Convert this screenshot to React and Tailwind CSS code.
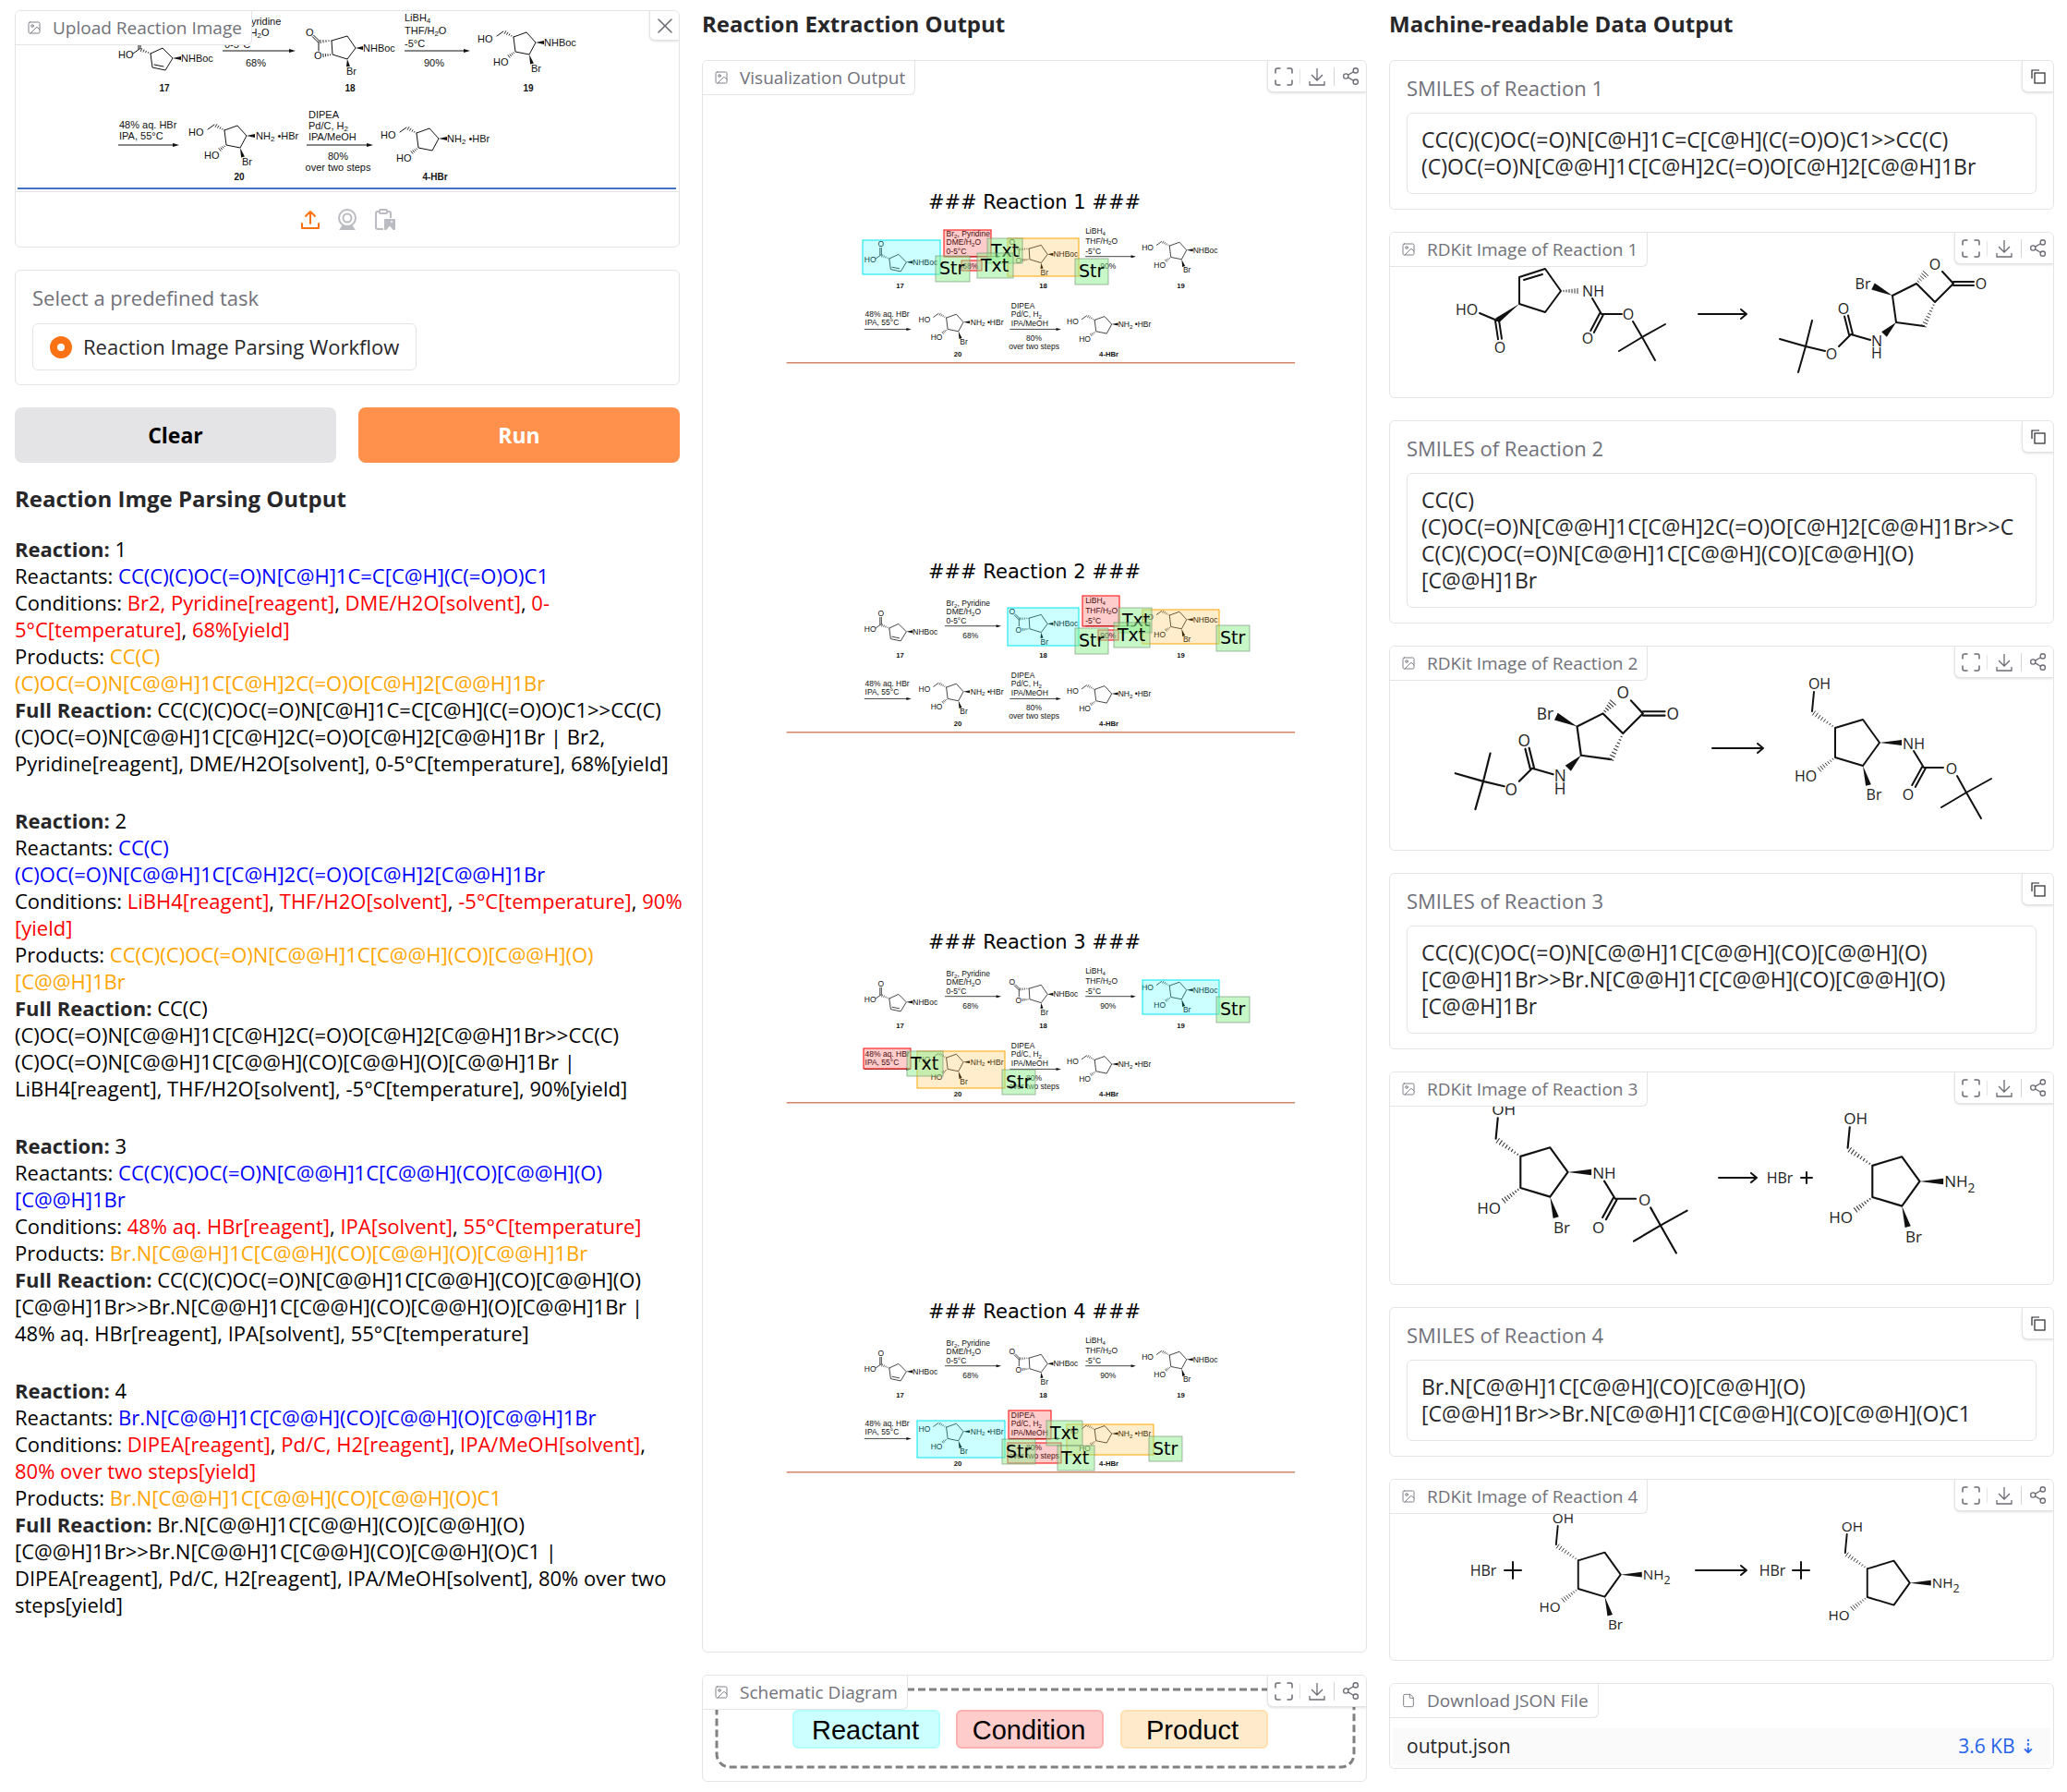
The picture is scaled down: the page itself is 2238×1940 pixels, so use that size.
import React, { useState } from 'react';
import { Image, Maximize, Share2, X, File } from 'lucide-react';

const reactions = [
  {
    reactants: ['CC(C)(C)OC(=O)N[C@H]1C=C[C@H](C(=O)O)C1'],
    conditions: [
      ['Br2, Pyridine[reagent]', 'DME/H2O[solvent]', '0-'],
      ['5°C[temperature]', '68%[yield]'],
    ],
    products: ['CC(C)', '(C)OC(=O)N[C@@H]1C[C@H]2C(=O)O[C@H]2[C@@H]1Br'],
    full: [
      'CC(C)(C)OC(=O)N[C@H]1C=C[C@H](C(=O)O)C1>>CC(C)',
      '(C)OC(=O)N[C@@H]1C[C@H]2C(=O)O[C@H]2[C@@H]1Br | Br2,',
      'Pyridine[reagent], DME/H2O[solvent], 0-5°C[temperature], 68%[yield]',
    ],
    smiles: [
      'CC(C)(C)OC(=O)N[C@H]1C=C[C@H](C(=O)O)C1>>CC(C)',
      '(C)OC(=O)N[C@@H]1C[C@H]2C(=O)O[C@H]2[C@@H]1Br',
    ],
  },
  {
    reactants: ['CC(C)', '(C)OC(=O)N[C@@H]1C[C@H]2C(=O)O[C@H]2[C@@H]1Br'],
    conditions: [
      ['LiBH4[reagent]', 'THF/H2O[solvent]', '-5°C[temperature]', '90%'],
      ['[yield]'],
    ],
    products: ['CC(C)(C)OC(=O)N[C@@H]1C[C@@H](CO)[C@@H](O)', '[C@@H]1Br'],
    full: [
      'CC(C)',
      '(C)OC(=O)N[C@@H]1C[C@H]2C(=O)O[C@H]2[C@@H]1Br>>CC(C)',
      '(C)OC(=O)N[C@@H]1C[C@@H](CO)[C@@H](O)[C@@H]1Br |',
      'LiBH4[reagent], THF/H2O[solvent], -5°C[temperature], 90%[yield]',
    ],
    smiles: [
      'CC(C)',
      '(C)OC(=O)N[C@@H]1C[C@H]2C(=O)O[C@H]2[C@@H]1Br>>C',
      'C(C)(C)OC(=O)N[C@@H]1C[C@@H](CO)[C@@H](O)',
      '[C@@H]1Br',
    ],
  },
  {
    reactants: ['CC(C)(C)OC(=O)N[C@@H]1C[C@@H](CO)[C@@H](O)', '[C@@H]1Br'],
    conditions: [['48% aq. HBr[reagent]', 'IPA[solvent]', '55°C[temperature]']],
    products: ['Br.N[C@@H]1C[C@@H](CO)[C@@H](O)[C@@H]1Br'],
    full: [
      'CC(C)(C)OC(=O)N[C@@H]1C[C@@H](CO)[C@@H](O)',
      '[C@@H]1Br>>Br.N[C@@H]1C[C@@H](CO)[C@@H](O)[C@@H]1Br |',
      '48% aq. HBr[reagent], IPA[solvent], 55°C[temperature]',
    ],
    smiles: [
      'CC(C)(C)OC(=O)N[C@@H]1C[C@@H](CO)[C@@H](O)',
      '[C@@H]1Br>>Br.N[C@@H]1C[C@@H](CO)[C@@H](O)',
      '[C@@H]1Br',
    ],
  },
  {
    reactants: ['Br.N[C@@H]1C[C@@H](CO)[C@@H](O)[C@@H]1Br'],
    conditions: [
      ['DIPEA[reagent]', 'Pd/C, H2[reagent]', 'IPA/MeOH[solvent]', ''],
      ['80% over two steps[yield]'],
    ],
    products: ['Br.N[C@@H]1C[C@@H](CO)[C@@H](O)C1'],
    full: [
      'Br.N[C@@H]1C[C@@H](CO)[C@@H](O)',
      '[C@@H]1Br>>Br.N[C@@H]1C[C@@H](CO)[C@@H](O)C1 |',
      'DIPEA[reagent], Pd/C, H2[reagent], IPA/MeOH[solvent], 80% over two',
      'steps[yield]',
    ],
    smiles: [
      'Br.N[C@@H]1C[C@@H](CO)[C@@H](O)',
      '[C@@H]1Br>>Br.N[C@@H]1C[C@@H](CO)[C@@H](O)C1',
    ],
  },
];

// top of each reaction in the visualization, then its boxes as kind, x, y, width, height
const overlays = [
  {
    top: 0,
    boxes: [
      ['reactant', 173, 194, 84, 37],
      ['condition', 261, 183, 51, 29],
      ['condition', 280, 216, 22, 11],
      ['product', 330, 192, 77, 41],
      ['Str', 252, 211, 37, 28],
      ['Txt', 308, 192, 38, 27],
      ['Txt', 297, 208, 39, 27],
      ['Str', 403, 214, 36, 28],
    ],
  },
  {
    top: 400,
    boxes: [
      ['reactant', 330, 192, 77, 41],
      ['condition', 411, 179, 40, 33],
      ['condition', 428, 216, 22, 11],
      ['product', 476, 194, 83, 37],
      ['Str', 403, 214, 36, 28],
      ['Txt', 450, 192, 36, 27],
      ['Txt', 445, 208, 39, 27],
      ['Str', 556, 211, 36, 28],
    ],
  },
  {
    top: 801,
    boxes: [
      ['reactant', 476, 194, 83, 37],
      ['condition', 174, 268, 51, 22],
      ['product', 232, 271, 95, 40],
      ['Str', 556, 212, 36, 28],
      ['Txt', 221, 271, 39, 27],
      ['Str', 324, 291, 36, 27],
    ],
  },
  {
    top: 1201,
    boxes: [
      ['reactant', 232, 271, 95, 40],
      ['condition', 331, 260, 46, 31],
      ['condition', 330, 295, 58, 22],
      ['product', 394, 275, 94, 33],
      ['Str', 324, 291, 36, 27],
      ['Txt', 372, 271, 39, 27],
      ['Txt', 384, 298, 40, 27],
      ['Str', 483, 288, 36, 27],
    ],
  },
];

const overlayColors = {
  reactant: ['#00ffff', '#00e5ee'],
  condition: ['#ff0000', '#ff0000'],
  product: ['#ffa500', '#ffa500'],
};

/* ---------- drawing helpers ---------- */

function Bonds({ d, w = 1 }) {
  return <path d={d} fill="none" stroke="#111" strokeWidth={w} strokeLinecap="round" strokeLinejoin="round" />;
}

function normal(a, b) {
  const dx = b[0] - a[0];
  const dy = b[1] - a[1];
  const len = Math.hypot(dx, dy);
  return [-dy / len, dx / len];
}

function Wedge({ from, to, size = 3 }) {
  const [nx, ny] = normal(from, to);
  return (
    <polygon
      fill="#111"
      points={`${from[0]},${from[1]} ${to[0] + nx * size},${to[1] + ny * size} ${to[0] - nx * size},${to[1] - ny * size}`}
    />
  );
}

function Hash({ from, to, size = 3, n = 6, w = 1 }) {
  const [nx, ny] = normal(from, to);
  const steps = Array.from({ length: n }, (_, i) => (i + 1) / n);
  return (
    <g stroke="#333" strokeWidth={w}>
      {steps.map((t) => {
        const x = from[0] + (to[0] - from[0]) * t;
        const y = from[1] + (to[1] - from[1]) * t;
        const s = size * (0.25 + 0.75 * t);
        return <line key={t} x1={x + nx * s} y1={y + ny * s} x2={x - nx * s} y2={y - ny * s} />;
      })}
    </g>
  );
}

function Double({ from, to, gap = 2, w = 1 }) {
  const [nx, ny] = normal(from, to);
  const line = (k) =>
    `M${from[0] + nx * gap * k} ${from[1] + ny * gap * k}L${to[0] + nx * gap * k} ${to[1] + ny * gap * k}`;
  return <Bonds w={w} d={line(1) + line(-1)} />;
}

function Arrow({ x1, x2, y }) {
  return (
    <g>
      <line x1={x1} x2={x2 - 3} y1={y} y2={y} stroke="#111" strokeWidth="1" />
      <polygon points={`${x2},${y} ${x2 - 7},${y - 2} ${x2 - 7},${y + 2}`} fill="#111" />
    </g>
  );
}

function OpenArrow({ x1, x2, y }) {
  return <Bonds w={2} d={`M${x1} ${y}H${x2}M${x2 - 6} ${y - 5}L${x2} ${y}L${x2 - 6} ${y + 5}`} />;
}

function Atom({ x, y, children }) {
  return (
    <text x={x} y={y + 6} textAnchor="middle">
      {children}
    </text>
  );
}

/* ---------- source scheme (compounds 17 to 4-HBr) ---------- */

function BromoRing({ x, y, br = true }) {
  return (
    <g transform={`translate(${x} ${y})`}>
      <Bonds d="M-18 -1L-11 -6M0 0L14 -5L24 6L17 19L2 16L0 0" />
      <Hash from={[0, 0]} to={[-9, -5]} size={2} n={4} />
      <Hash from={[2, 16]} to={[-5, 21]} size={2} n={4} />
      <Wedge from={[24, 6]} to={[33, 6]} size={2} />
      {br && <Wedge from={[17, 19]} to={[20, 29]} size={2} />}
      <text x="-39" y="6">HO</text>
      <text x="-22" y="31">HO</text>
      {br && <text x="19" y="38">Br</text>}
    </g>
  );
}

function Scheme({ line }) {
  return (
    <g fontFamily="Liberation Sans, Arial, sans-serif" fontSize="11" fill="#111">
      {/* 17 */}
      <text x="128" y="62">HO</text>
      <text x="147" y="40">O</text>
      <Double from={[151, 42]} to={[151, 52]} gap={1} />
      <Bonds d="M144 57L151 52M163 57L176 51L187 62L179 75L165 72L163 57M167 69L177 71" />
      <Hash from={[163, 57]} to={[153, 53]} size={2} n={4} />
      <Wedge from={[187, 62]} to={[196, 62]} size={2} />
      <text x="196" y="66">NHBoc</text>

      <text x="243" y="26">Br<tspan fontSize="8" dy="2">2</tspan><tspan dy="-2">, Pyridine</tspan></text>
      <text x="243" y="38">DME/H<tspan fontSize="8" dy="2">2</tspan><tspan dy="-2">O</tspan></text>
      <text x="243" y="51">0-5°C</text>
      <Arrow x1={241} x2={320} y={54} />
      <text x="277" y="71" textAnchor="middle">68%</text>

      {/* 18 */}
      <text x="331" y="38">O</text>
      <text x="340" y="63">O</text>
      <Double from={[339, 38]} to={[345, 44]} gap={1} />
      <Bonds d="M345 44V54M359 43L376 38L385 51L376 63L360 58L359 43" />
      <Hash from={[359, 43]} to={[347, 44]} size={2} n={4} />
      <Hash from={[360, 58]} to={[350, 59]} size={2} n={4} />
      <Wedge from={[385, 51]} to={[393, 51]} size={2} />
      <Wedge from={[376, 63]} to={[377, 71]} size={2} />
      <text x="393" y="55">NHBoc</text>
      <text x="375" y="80">Br</text>

      <text x="438" y="22">LiBH<tspan fontSize="8" dy="2">4</tspan></text>
      <text x="438" y="36">THF/H<tspan fontSize="8" dy="2">2</tspan><tspan dy="-2">O</tspan></text>
      <text x="438" y="50">-5°C</text>
      <Arrow x1={438} x2={509} y={54} />
      <text x="470" y="71" textAnchor="middle">90%</text>

      {/* 19 */}
      <BromoRing x={556} y={39} />
      <text x="589" y="49">NHBoc</text>

      <text x="129" y="138">48% aq. HBr</text>
      <text x="129" y="150">IPA, 55°C</text>
      <Arrow x1={128} x2={194} y={156} />

      {/* 20 */}
      <BromoRing x={243} y={140} />
      <text x="277" y="150">NH<tspan fontSize="8" dy="2">2</tspan><tspan dy="-2"> •HBr</tspan></text>

      <text x="334" y="127">DIPEA</text>
      <text x="334" y="139">Pd/C, H<tspan fontSize="8" dy="2">2</tspan></text>
      <text x="334" y="151">IPA/MeOH</text>
      <Arrow x1={332} x2={404} y={156} />
      <text x="366" y="172" textAnchor="middle">80%</text>
      <text x="366" y="184" textAnchor="middle">over two steps</text>

      {/* 4-HBr */}
      <BromoRing x={451} y={143} br={false} />
      <text x="484" y="153">NH<tspan fontSize="8" dy="2">2</tspan><tspan dy="-2"> •HBr</tspan></text>

      <g fontWeight="bold" fontSize="10" textAnchor="middle">
        <text x="178" y="98">17</text>
        <text x="379" y="98">18</text>
        <text x="572" y="98">19</text>
        <text x="259" y="194">20</text>
        <text x="471" y="194">4-HBr</text>
      </g>
      <line x1="19" x2="732" y1="203" y2="203" stroke={line} strokeWidth="2" />
    </g>
  );
}

function UploadDrawing() {
  return (
    <svg viewBox="0 0 718 195" className="block w-full" role="img" aria-label="Reaction scheme">
      <g transform="translate(-17 -11)">
        <Scheme line="#4472c4" />
      </g>
    </svg>
  );
}

function Overlay({ kind, x, y, w, h }) {
  if (kind === 'Str' || kind === 'Txt') {
    return (
      <g>
        <rect x={x} y={y} width={w} height={h} fill="#90ee90" fillOpacity="0.5" stroke="#6b8e6b" strokeOpacity="0.6" />
        <text x={x + 4} y={y + 20} fontSize="19">{kind}</text>
      </g>
    );
  }
  const [fill, stroke] = overlayColors[kind];
  return <rect x={x} y={y} width={w} height={h} fill={fill} fillOpacity="0.2" stroke={stroke} />;
}

function VisualizationDrawing() {
  return (
    <svg viewBox="0 0 718 1722" className="block w-full" role="img" aria-label="Extracted reactions">
      {overlays.map(({ top, boxes }, i) => (
        <g key={i} transform={`translate(0 ${top})`} fontFamily="DejaVu Sans, sans-serif">
          <text x="359" y="160" fontSize="21" textAnchor="middle">{`### Reaction ${i + 1} ###`}</text>
          <g transform="translate(76 170) scale(0.772)">
            <Scheme line="#d2876a" />
          </g>
          {boxes.map(([kind, x, y, w, h], k) => (
            <Overlay key={k} kind={kind} x={x} y={y} w={w} h={h} />
          ))}
        </g>
      ))}
    </svg>
  );
}

function SchematicDrawing() {
  return (
    <svg viewBox="0 0 718 114" className="block w-full" role="img" aria-label="Legend">
      <rect x="15" y="15" width="690" height="84" rx="14" fill="none" stroke="#808080" strokeWidth="3" strokeDasharray="8 4" />
      <rect x="98" y="38" width="158" height="40" rx="5" fill="#ccffff" stroke="#b3fdfd" strokeWidth="2" />
      <rect x="275" y="38" width="158" height="40" rx="5" fill="#ffcccc" stroke="#ffb0b0" strokeWidth="2" />
      <rect x="453" y="38" width="158" height="40" rx="5" fill="#ffebcc" stroke="#ffe0b0" strokeWidth="2" />
      <g fontFamily="Liberation Sans, Arial, sans-serif" fontSize="29" textAnchor="middle">
        <text x="176" y="69">Reactant</text>
        <text x="353" y="69">Condition</text>
        <text x="530" y="69">Product</text>
      </g>
    </svg>
  );
}

/* ---------- molecules of the RDKit panels ---------- */

function Lactone() {
  return (
    <g>
      <Bonds
        w={2}
        d="M544 68L570 55L590 75M578 101L548 97L544 68M598 42L610 55L590 75M520 116L499 110L486 123M471 128L450 123M457 95L450 123L442 151M422 115L450 123"
      />
      <Double from={[610, 55]} to={[632, 55]} w={2} />
      <Double from={[499, 110]} to={[494, 90]} w={2} />
      <Wedge from={[544, 68]} to={[523, 58]} size={4} />
      <Wedge from={[548, 97]} to={[535, 110]} size={4} />
      <Hash from={[570, 55]} to={[580, 44]} n={5} size={4} />
      <Hash from={[590, 75]} to={[578, 101]} n={8} />
      <Atom x={512} y={55}>Br</Atom>
      <Atom x={590} y={34}>O</Atom>
      <Atom x={640} y={55}>O</Atom>
      <Atom x={491} y={82}>O</Atom>
      <Atom x={478} y={131}>O</Atom>
      <Atom x={527} y={117}>N</Atom>
      <Atom x={527} y={130}>H</Atom>
    </g>
  );
}

function Cyclopentane({ br = true, boc = false }) {
  return (
    <g>
      <Bonds w={2} d="M459 49L457 70M482 88L512 79L530 104L512 129L482 120L482 88" />
      <Hash from={[482, 88]} to={[459, 72]} n={8} />
      <Hash from={[482, 120]} to={[465, 133]} n={7} />
      <Wedge from={[530, 104]} to={[554, 104]} />
      <Atom x={465} y={40}>OH</Atom>
      <Atom x={450} y={140}>HO</Atom>
      {br && <Wedge from={[512, 129]} to={[518, 150]} />}
      {br && <Atom x={524} y={160}>Br</Atom>}
      {boc ? (
        <g>
          <Atom x={567} y={105}>NH</Atom>
          <Bonds w={2} d="M567 113L578 131H599M614 140L624 158M651 143L624 158L597 174M624 158L640 186" />
          <Double from={[578, 131]} to={[567, 151]} w={2} />
          <Atom x={608} y={132}>O</Atom>
          <Atom x={561} y={160}>O</Atom>
        </g>
      ) : (
        <text x="555" y="110">
          NH<tspan fontSize="13" dy="5">2</tspan>
        </text>
      )}
    </g>
  );
}

function Drawing({ height, label, children }) {
  return (
    <svg viewBox={`0 0 718 ${height}`} className="block w-full" role="img" aria-label={label}>
      <g fontFamily="Open Sans, sans-serif" fontSize="16" fill="#222">{children}</g>
    </svg>
  );
}

const rdkitDrawings = [
  <Drawing key="1" height={178} label="RDKit drawing 1">
    <Bonds
      w={2}
      d="M97 87L116 95M140 77V48L168 39L185 63L168 86L140 77M145 51L165 45M219 71L229 88H251M263 96L273 113M298 99L273 113L248 128M273 113L287 138"
    />
    <Wedge from={[140, 77]} to={[116, 95]} />
    <Double from={[116, 95]} to={[119, 115]} w={2} />
    <Double from={[229, 88]} to={[219, 107]} w={2} />
    <Hash from={[185, 63]} to={[203, 63]} />
    <Atom x={83} y={83}>HO</Atom>
    <Atom x={119} y={124}>O</Atom>
    <Atom x={220} y={63}>NH</Atom>
    <Atom x={258} y={88}>O</Atom>
    <Atom x={214} y={114}>O</Atom>
    <OpenArrow x1={334} x2={386} y={88} />
    <Lactone />
  </Drawing>,
  <Drawing key="2" height={220} label="RDKit drawing 2">
    <g transform="translate(-385 13) scale(1.08)">
      <Lactone />
    </g>
    <OpenArrow x1={349} x2={404} y={110} />
    <Cyclopentane boc />
  </Drawing>,
  <Drawing key="3" height={229} label="RDKit drawing 3">
    <g transform="translate(-373 -3) scale(1.067)">
      <Cyclopentane boc />
    </g>
    <OpenArrow x1={356} x2={397} y={114} />
    <Atom x={422} y={114}>HBr</Atom>
    <Bonds w={2} d="M445 114H457M451 108V120" />
    <g transform="translate(8 7) scale(1.067)">
      <Cyclopentane />
    </g>
  </Drawing>,
  <Drawing key="4" height={195} label="RDKit drawing 4">
    <Atom x={101} y={98}>HBr</Atom>
    <Bonds w={2} d="M124 98H142M133 89V107" />
    <g transform="translate(-258 3) scale(0.958)">
      <Cyclopentane />
    </g>
    <OpenArrow x1={331} x2={386} y={98} />
    <Atom x={414} y={98}>HBr</Atom>
    <Bonds w={2} d="M436 98H454M445 89V107" />
    <g transform="translate(55 12) scale(0.958)">
      <Cyclopentane br={false} />
    </g>
  </Drawing>,
];

/* ---------- icons ---------- */

function DownloadIcon() {
  return (
    <svg viewBox="0 0 20 20" className="size-5" fill="none" stroke="currentColor" strokeWidth="1.3">
      <path d="M10 1V14M4 8L10 14L16 8M2 15V19H18V15" />
    </svg>
  );
}

function UploadIcon() {
  return (
    <svg viewBox="0 0 22 22" className="size-[22px]" fill="none" stroke="currentColor" strokeWidth="2" strokeLinecap="round" strokeLinejoin="round">
      <path d="M11 15V2M6 7L11 2L16 7M2 15V20H20V15" />
    </svg>
  );
}

function WebcamIcon() {
  return (
    <svg viewBox="0 0 24 24" className="size-6" fill="none" stroke="currentColor" strokeWidth="2">
      <circle cx="12" cy="10" r="9" />
      <circle cx="12" cy="10" r="4.5" />
      <path d="M7 19L5 22H19L17 19Z" fill="currentColor" />
    </svg>
  );
}

function PasteIcon() {
  return (
    <svg viewBox="0 0 24 24" className="size-6" fill="none" stroke="currentColor" strokeWidth="2" strokeLinejoin="round">
      <path d="M10 22H4Q2 22 2 20V5Q2 3 4 3H16Q18 3 18 5V10" />
      <rect x="6" y="1" width="8" height="4" rx="1" fill="white" />
      <path d="M12 12H22V22H21L17 17L13 22H12Z" fill="currentColor" />
      <circle cx="19" cy="14" r="1" fill="white" stroke="none" />
    </svg>
  );
}

function CopyIcon() {
  return (
    <svg viewBox="0 0 16 16" className="size-4" fill="none" stroke="currentColor" strokeWidth="1.2">
      <path d="M1 10V1H9" />
      <rect x="4" y="4" width="11" height="11" />
    </svg>
  );
}

/* ---------- page parts ---------- */

function Card({ className = '', children }) {
  return (
    <section className={`relative overflow-hidden rounded-md border border-[#e4e4e7] bg-white ${className}`}>
      {children}
    </section>
  );
}

function BlockLabel({ icon: Icon = Image, children }) {
  return (
    <h3 className="absolute top-0 left-0 flex h-[37px] items-center gap-3 rounded-br-md border-r border-b border-[#e4e4e7] bg-white pr-2.5 pl-3 text-[19px] text-[#71717a]">
      <Icon className="size-4" strokeWidth={1.3} />
      {children}
    </h3>
  );
}

function Toolbar() {
  return (
    <div className="absolute top-0 right-0 flex h-[34px] items-center rounded-bl-md border-b border-l border-[#e4e4e7] bg-white text-[#6b6b73] shadow-sm">
      <button type="button" aria-label="Fullscreen" className="flex w-[34px] justify-center">
        <Maximize className="size-6" strokeWidth={1.5} />
      </button>
      <span className="h-4 w-px bg-[#e4e4e7]" />
      <button type="button" aria-label="Download" className="flex w-9 justify-center">
        <DownloadIcon />
      </button>
      <span className="h-5 w-px bg-[#d4d4d8]" />
      <button type="button" aria-label="Share" className="flex w-[34px] justify-center">
        <Share2 className="size-[21px]" strokeWidth={1.5} />
      </button>
    </div>
  );
}

function Heading({ children }) {
  return <h2 className="text-[24px] leading-[30px] font-bold text-[#27272a]">{children}</h2>;
}

function Lines({ items, className }) {
  return items.map((line, i) => (
    <React.Fragment key={i}>
      {i > 0 && <br />}
      <span className={className}>{line}</span>
    </React.Fragment>
  ));
}

function ReactionText({ number, data }) {
  return (
    <p className="text-[22px] leading-[29px] whitespace-nowrap text-black">
      <strong className="text-[#27272a]">Reaction:</strong> {number}
      <br />
      Reactants: <Lines items={data.reactants} className="text-[#0000ff]" />
      <br />
      Conditions:{' '}
      {data.conditions.map((row, i) => (
        <React.Fragment key={i}>
          {i > 0 && <br />}
          {row.map((item, k) => (
            <React.Fragment key={k}>
              {k > 0 && ', '}
              <span className="text-[#ff0000]">{item}</span>
            </React.Fragment>
          ))}
        </React.Fragment>
      ))}
      <br />
      Products: <Lines items={data.products} className="text-[#ffa500]" />
      <br />
      <strong className="text-[#27272a]">Full Reaction:</strong> <Lines items={data.full} />
    </p>
  );
}

function SmilesBox({ number, lines }) {
  const id = `smiles-${number}`;
  return (
    <Card className="px-[18px] pt-3.5 pb-4">
      <label htmlFor={id} className="mb-3 block text-[22px] leading-[30px] text-[#71717a]">
        SMILES of Reaction {number}
      </label>
      <textarea
        id={id}
        readOnly
        rows={lines.length}
        value={lines.join('\n')}
        className="block w-full resize-none overflow-hidden rounded-md border border-[#e4e4e7] px-[15px] py-3.5 text-[23px] leading-[29px] text-[#27272a]"
      />
      <button
        type="button"
        aria-label="Copy"
        className="absolute top-0 right-0 flex h-[34px] w-[34px] items-center justify-center rounded-bl-md border-b border-l border-[#e4e4e7] bg-white text-[#27272a] shadow-sm"
      >
        <CopyIcon />
      </button>
    </Card>
  );
}

export default function App() {
  const [task, setTask] = useState('workflow');

  return (
    <main className="grid grid-cols-3 items-start gap-6 bg-white pt-[11px] pr-3.5 pl-4 font-['Open_Sans','Noto_Sans',sans-serif]">
      <div className="flex min-w-0 flex-col gap-6">
        <Card>
          <UploadDrawing />
          <div className="flex h-[60px] items-center justify-center gap-[17px] border-t border-[#e4e4e7] pl-0.5 text-[#bbbbc2]">
            <button type="button" aria-label="Upload file" className="text-[#f97316]">
              <UploadIcon />
            </button>
            <button type="button" aria-label="Webcam">
              <WebcamIcon />
            </button>
            <button type="button" aria-label="Paste">
              <PasteIcon />
            </button>
          </div>
          <BlockLabel>Upload Reaction Image</BlockLabel>
          <button
            type="button"
            aria-label="Remove image"
            className="absolute top-0 right-0 flex h-8 w-8 items-center justify-center rounded-bl-md border-b border-l border-[#e4e4e7] bg-white text-[#6b6b73] shadow-sm"
          >
            <X className="size-7" strokeWidth={1.3} />
          </button>
        </Card>

        <Card className="px-[18px] pt-3.5 pb-[15px]">
          <fieldset>
            <legend className="mb-[13px] text-[22px] leading-[30px] text-[#71717a]">Select a predefined task</legend>
            <label className="inline-flex h-[51px] items-center gap-3 rounded-md border border-[#e4e4e7] px-[18px] align-top text-[22px] text-[#27272a]">
              <input
                type="radio"
                name="task"
                value="workflow"
                checked={task === 'workflow'}
                onChange={(e) => setTask(e.target.value)}
                className="size-6 appearance-none rounded-full border-8 border-[#f97316] bg-white"
              />
              Reaction Image Parsing Workflow
            </label>
          </fieldset>
        </Card>

        <div className="grid grid-cols-2 gap-6 text-[23px] font-bold">
          <button type="button" className="h-[60px] rounded-lg bg-[#e4e4e7] text-black">
            Clear
          </button>
          <button type="button" className="h-[60px] rounded-lg bg-[#ff914d] text-white">
            Run
          </button>
        </div>

        <Heading>Reaction Imge Parsing Output</Heading>
        <div className="flex flex-col gap-[33px] pt-px">
          {reactions.map((data, i) => (
            <ReactionText key={i} number={i + 1} data={data} />
          ))}
        </div>
      </div>

      <div className="flex min-w-0 flex-col gap-6">
        <Heading>Reaction Extraction Output</Heading>
        <Card>
          <VisualizationDrawing />
          <BlockLabel>Visualization Output</BlockLabel>
          <Toolbar />
        </Card>
        <Card>
          <SchematicDrawing />
          <BlockLabel>Schematic Diagram</BlockLabel>
          <Toolbar />
        </Card>
      </div>

      <div className="flex min-w-0 flex-col gap-6">
        <Heading>Machine-readable Data Output</Heading>
        {reactions.map((data, i) => (
          <React.Fragment key={i}>
            <SmilesBox number={i + 1} lines={data.smiles} />
            <Card>
              {rdkitDrawings[i]}
              <BlockLabel>RDKit Image of Reaction {i + 1}</BlockLabel>
              <Toolbar />
            </Card>
          </React.Fragment>
        ))}
        <Card className="px-[3px] pt-12 pb-[3px]">
          <BlockLabel icon={File}>Download JSON File</BlockLabel>
          <div className="flex h-10 items-center justify-between bg-[#fafafa] px-[15px] text-[21px] text-[#27272a]">
            <span>output.json</span>
            <a href="#output.json" className="text-[#2563eb]">
              3.6 KB ⇣
            </a>
          </div>
        </Card>
      </div>
    </main>
  );
}
